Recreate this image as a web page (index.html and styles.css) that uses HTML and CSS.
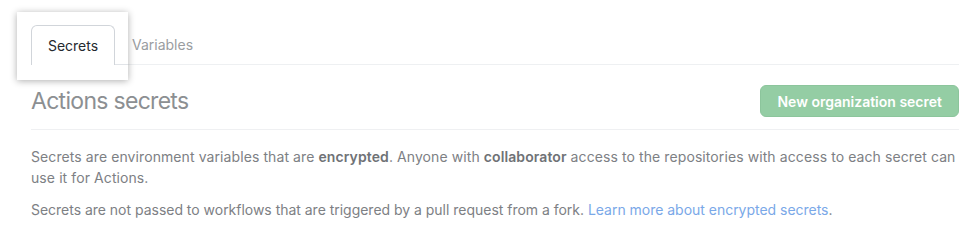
FILE: index.html
```html
<!DOCTYPE html>
<html lang="en">
<head>
<meta charset="utf-8">
<title>Actions secrets</title>
<link rel="stylesheet" href="styles.css">
</head>
<body>
<div class="page">
  <nav class="tabnav">
    <div class="spot">
      <a class="tab tab-selected" href="#">Secrets</a>
    </div>
    <a class="tab" href="#">Variables</a>
  </nav>

  <div class="subhead">
    <h2 class="subhead-title">Actions secrets</h2>
    <button class="btn-primary" type="button">New organization secret</button>
  </div>

  <p class="text text-wide">Secrets are environment variables that are <strong>encrypted</strong>. Anyone with <strong>collaborator</strong> access to the repositories with access to each secret can use it for Actions.</p>
  <p class="text text-tight">Secrets are not passed to workflows that are triggered by a pull request from a fork. <a class="link" href="#">Learn more about encrypted secrets</a>.</p>
</div>
</body>
</html>
```

FILE: styles.css
```css
html, body {
  margin: 0;
  padding: 0;
  background: #ffffff;
}

body {
  font-family: Inter, "Noto Sans", "Liberation Sans", sans-serif;
  font-size: 14px;
  line-height: 21px;
  color: #7d8084;
}

.page {
  width: 928px;
  padding: 25px 0 0 31px;
}

.tabnav {
  display: flex;
  align-items: flex-end;
  height: 39px;
  border-bottom: 1px solid #eef0f2;
}

.spot {
  position: relative;
  z-index: 2;
  display: flex;
  margin: -13px -13px -16px -14px;
  padding: 13px 13px 16px 14px;
  background: #ffffff;
  box-shadow: 0 1px 7px rgba(0, 0, 0, 0.32);
}

.spot::after {
  content: "";
  position: absolute;
  left: 98px;
  right: 0;
  top: 52px;
  height: 1px;
  background: #e1e4e8;
}

.tab {
  display: flex;
  align-items: center;
  height: 39px;
  padding: 0 16px;
  border: 1px solid transparent;
  border-bottom: 0;
  border-radius: 6px 6px 0 0;
  color: #9a9da1;
  text-decoration: none;
  font-size: 14px;
}

.tab-selected {
  position: relative;
  z-index: 1;
  justify-content: center;
  margin-bottom: -1px;
  height: 40px;
  padding: 0 16px 1px;
  box-sizing: border-box;
  width: 84px;
  border-color: #d1d5da;
  background: #ffffff;
  color: #24292e;
}

.subhead {
  display: flex;
  align-items: center;
  justify-content: space-between;
  margin-top: 18px;
  padding-bottom: 10px;
  border-bottom: 1px solid #eff0f2;
}

.subhead-title {
  margin: 0;
  font-size: 23px;
  line-height: 36px;
  font-weight: 400;
  letter-spacing: -0.7px;
  color: #8c8f92;
}

.btn-primary {
  height: 32px;
  padding: 0 16px;
  border: 1px solid #8cc59c;
  border-radius: 6px;
  background: #94cda4;
  color: #ffffff;
  font-family: inherit;
  font-size: 14px;
  font-weight: 600;
  cursor: pointer;
}

.text {
  margin: 16px 0 11px;
}

.text + .text {
  margin-top: 0;
}

.text-wide {
  letter-spacing: 0.09px;
}

.text-tight {
  letter-spacing: -0.02px;
}

.text strong {
  font-weight: 600;
  color: #6f7276;
}

.link {
  color: #7aa8e8;
  text-decoration: none;
}
```
